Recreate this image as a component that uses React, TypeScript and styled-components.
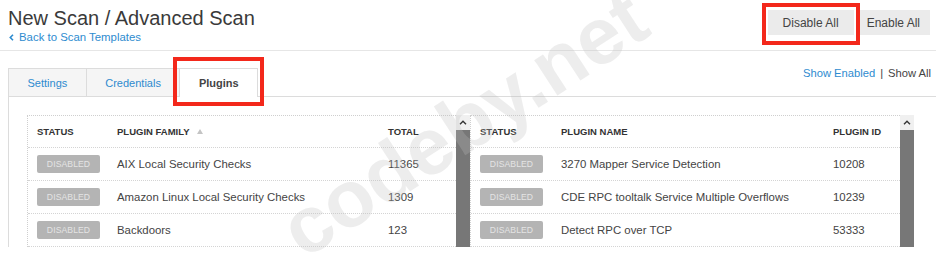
import React from "react";
import styled, { createGlobalStyle } from "styled-components";

const GlobalStyle = createGlobalStyle`
  *, *::before, *::after { box-sizing: border-box; }
  html, body { margin: 0; padding: 0; background: #ffffff; }
  body { font-family: "Liberation Sans", Arial, sans-serif; }
`;

const BLUE = "#2e8bcf";

const Page = styled.div`
  position: relative;
  width: 936px;
  height: 263px;
  overflow: hidden;
  background: #fff;
`;

const Header = styled.header`
  display: flex;
  justify-content: space-between;
  align-items: flex-start;
  height: 51px;
  padding: 0 6px 0 8px;
  border-bottom: 1px solid #e6e6e6;
`;

const TitleBlock = styled.div`
  display: flex;
  flex-direction: column;
  padding-top: 6px;
`;

const Title = styled.h1`
  margin: 0;
  font-size: 20px;
  line-height: 24px;
  font-weight: normal;
  color: #3a3a3a;
`;

const BackLink = styled.a`
  display: flex;
  align-items: center;
  gap: 5px;
  padding-left: 1px;
  font-size: 11.4px;
  line-height: 14px;
  color: ${BLUE};
  text-decoration: none;
`;

const ButtonGroup = styled.div`
  display: flex;
  gap: 3px;
  padding-top: 10px;
`;

const ActionButton = styled.button<{ $pad: number }>`
  height: 25px;
  padding: 0 ${(p) => p.$pad}px;
  border: none;
  border-radius: 0;
  background: #ebebeb;
  color: #444;
  font-family: "Liberation Sans", Arial, sans-serif;
  font-size: 12px;
`;

const TabsRow = styled.div`
  display: flex;
  justify-content: space-between;
  align-items: flex-start;
  margin-top: 17px;
  padding: 0 5px 0 8px;
`;

const TabList = styled.div`
  display: flex;
  align-items: flex-start;
`;

const Tab = styled.div<{ $active?: boolean }>`
  position: relative;
  z-index: ${(p) => (p.$active ? 2 : 1)};
  display: flex;
  align-items: center;
  height: ${(p) => (p.$active ? 29 : 28)}px;
  padding: 0 18.5px ${(p) => (p.$active ? 1 : 0)}px;
  margin-left: -1px;
  border: 1px solid #dcdcdc;
  border-bottom: none;
  background: ${(p) => (p.$active ? "#ffffff" : "#f5f5f5")};
  color: ${(p) => (p.$active ? "#444" : BLUE)};
  font-size: 11px;
  font-weight: ${(p) => (p.$active ? "bold" : "normal")};
  &:first-child { margin-left: 0; }
`;

const ShowLinks = styled.div`
  display: flex;
  align-items: center;
  margin-top: -2px;
  font-size: 11.2px;
  line-height: 14px;
  color: #444;
`;

const ShowLink = styled.span<{ $active?: boolean }>`
  color: ${(p) => (p.$active ? BLUE : "#444")};
`;

const Sep = styled.span`
  margin: 0 5px;
`;

const Panel = styled.div`
  margin: -1px 0 0 8px;
  height: 151px;
  overflow: hidden;
  border-top: 1px solid #dcdcdc;
  border-left: 1px solid #dcdcdc;
  padding: 18px 0 0 18px;
`;

const Panes = styled.div`
  display: flex;
`;

const Pane = styled.div`
  display: flex;
`;

const Table = styled.div<{ $width: number }>`
  width: ${(p) => p.$width}px;
  border-top: 1px dotted #cfcfcf;
  border-left: 1px dotted #cfcfcf;
`;

const Row = styled.div<{ $cols: string; $head?: boolean }>`
  display: grid;
  grid-template-columns: ${(p) => p.$cols};
  align-items: center;
  height: ${(p) => (p.$head ? 32 : 33)}px;
  border-bottom: 1px dotted #d4d4d4;
`;

const HeadCell = styled.div`
  display: flex;
  align-items: center;
  gap: 7px;
  padding-left: 9px;
  font-size: 9.5px;
  font-weight: bold;
  color: #333;
  white-space: nowrap;
`;

const Cell = styled.div`
  padding-left: 9px;
  font-size: 11.4px;
  color: #444;
  white-space: nowrap;
`;

const Badge = styled.span`
  display: inline-flex;
  align-items: center;
  justify-content: center;
  width: 63px;
  height: 18px;
  border-radius: 2px;
  background: #b4b4b4;
  color: #e4e4e4;
  font-size: 8.6px;
  letter-spacing: 0.1px;
`;

const Scrollbar = styled.div`
  display: flex;
  flex-direction: column;
  width: 14px;
  height: 140px;
`;

const ScrollUp = styled.div`
  display: flex;
  align-items: center;
  justify-content: center;
  height: 15px;
  background: #f0f0f0;
`;

const Thumb = styled.div`
  flex: 1;
  background: #777777;
`;

const Highlight = styled.div<{ $x: number; $y: number; $w: number; $h: number }>`
  position: absolute;
  left: ${(p) => p.$x}px;
  top: ${(p) => p.$y}px;
  width: ${(p) => p.$w}px;
  height: ${(p) => p.$h}px;
  border: 4.5px solid #f3281b;
  pointer-events: none;
  z-index: 6;
`;

const Watermark = styled.span`
  position: absolute;
  left: 464px;
  top: 124px;
  transform: translate(-50%, -50%) rotate(-33deg);
  font-family: "Liberation Sans", Arial, sans-serif;
  font-weight: bold;
  font-size: 80px;
  line-height: 80px;
  color: rgba(190, 190, 190, 0.28);
  white-space: nowrap;
  pointer-events: none;
  z-index: 5;
`;

const ChevronLeft = () => (
  <svg width="5" height="7" viewBox="0 0 5 7">
    <path d="M4 0.8 L1.3 3.5 L4 6.2" fill="none" stroke={BLUE} strokeWidth="1.6" />
  </svg>
);

const CaretUp = () => (
  <svg width="8" height="5" viewBox="0 0 8 5">
    <path d="M1 4.2 L4 1.2 L7 4.2" fill="none" stroke="#333" strokeWidth="1.4" />
  </svg>
);

const SortArrow = () => (
  <svg width="6" height="5" viewBox="0 0 6 5">
    <path d="M3 0 L6 5 L0 5 Z" fill="#c4c4c4" />
  </svg>
);

const families = [
  { name: "AIX Local Security Checks", total: "11365" },
  { name: "Amazon Linux Local Security Checks", total: "1309" },
  { name: "Backdoors", total: "123" },
];

const plugins = [
  { name: "3270 Mapper Service Detection", id: "10208" },
  { name: "CDE RPC tooltalk Service Multiple Overflows", id: "10239" },
  { name: "Detect RPC over TCP", id: "53333" },
];

const LEFT_COLS = "80px 271px 1fr";
const RIGHT_COLS = "81px 272px 1fr";

const ScrollColumn = () => (
  <Scrollbar>
    <ScrollUp>
      <CaretUp />
    </ScrollUp>
    <Thumb />
  </Scrollbar>
);

export default function App() {
  return (
    <Page>
      <GlobalStyle />
      <Header>
        <TitleBlock>
          <Title>New Scan / Advanced Scan</Title>
          <BackLink href="#">
            <ChevronLeft />
            Back to Scan Templates
          </BackLink>
        </TitleBlock>
        <ButtonGroup>
          <ActionButton $pad={15}>Disable All</ActionButton>
          <ActionButton $pad={10}>Enable All</ActionButton>
        </ButtonGroup>
      </Header>

      <TabsRow>
        <TabList>
          <Tab>Settings</Tab>
          <Tab>Credentials</Tab>
          <Tab $active>Plugins</Tab>
        </TabList>
        <ShowLinks>
          <ShowLink $active>Show Enabled</ShowLink>
          <Sep>|</Sep>
          <ShowLink>Show All</ShowLink>
        </ShowLinks>
      </TabsRow>

      <Panel>
        <Panes>
          <Pane>
            <Table $width={429}>
              <Row $cols={LEFT_COLS} $head>
                <HeadCell>STATUS</HeadCell>
                <HeadCell>
                  PLUGIN FAMILY
                  <SortArrow />
                </HeadCell>
                <HeadCell>TOTAL</HeadCell>
              </Row>
              {families.map((f) => (
                <Row $cols={LEFT_COLS} key={f.name}>
                  <Cell>
                    <Badge>DISABLED</Badge>
                  </Cell>
                  <Cell>{f.name}</Cell>
                  <Cell>{f.total}</Cell>
                </Row>
              ))}
            </Table>
            <ScrollColumn />
          </Pane>
          <Pane>
            <Table $width={430}>
              <Row $cols={RIGHT_COLS} $head>
                <HeadCell>STATUS</HeadCell>
                <HeadCell>PLUGIN NAME</HeadCell>
                <HeadCell>PLUGIN ID</HeadCell>
              </Row>
              {plugins.map((p) => (
                <Row $cols={RIGHT_COLS} key={p.id}>
                  <Cell>
                    <Badge>DISABLED</Badge>
                  </Cell>
                  <Cell>{p.name}</Cell>
                  <Cell>{p.id}</Cell>
                </Row>
              ))}
            </Table>
            <ScrollColumn />
          </Pane>
        </Panes>
      </Panel>

      <Highlight $x={762} $y={3} $w={98} $h={42} />
      <Highlight $x={173} $y={57} $w={91} $h={49} />
      <Watermark>codeby.net</Watermark>
    </Page>
  );
}
